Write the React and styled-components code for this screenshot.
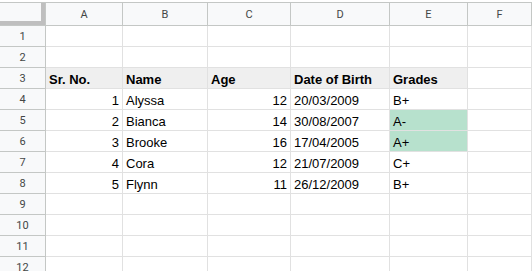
import styled, { createGlobalStyle } from "styled-components";

const GlobalStyle = createGlobalStyle`
  html, body {
    margin: 0;
    padding: 0;
    background: #fff;
    overflow: hidden;
  }
`;

const Sheet = styled.div`
  margin-top: 2px;
  border-top: 1px solid #c4c7c5;
  display: grid;
  grid-template-columns: 46px 77px 85px 83px 99px 78px 1fr;
  grid-template-rows: 23px repeat(12, 21px);
  width: 532px;
  font-family: "Liberation Sans", Arial, sans-serif;
`,
  Corner = styled.div`
    box-sizing: border-box;
    background: #f8f9fa;
    border-right: 1px solid #c4c7c5;
    border-bottom: 1px solid #c4c7c5;
    box-shadow: inset -4px -4px 0 #bfbfbf;
  `,
  ColHead = styled.div`
    box-sizing: border-box;
    background: #f8f9fa;
    border-right: 1px solid #c4c7c5;
    border-bottom: 1px solid #c4c7c5;
    display: flex;
    align-items: center;
    justify-content: center;
    font-family: Roboto, "Liberation Sans", sans-serif;
    font-size: 11px;
    color: #444746;
  `,
  RowHead = styled.div`
    box-sizing: border-box;
    background: #f8f9fa;
    border-right: 1px solid #c4c7c5;
    border-bottom: 1px solid #c4c7c5;
    display: flex;
    align-items: center;
    justify-content: center;
    font-family: Roboto, "Liberation Sans", sans-serif;
    font-size: 11px;
    color: #444746;
  `,
  Cell = styled.div`
    box-sizing: border-box;
    border-right: 1px solid #e1e1e1;
    border-bottom: 1px solid #e1e1e1;
    background: ${(p) => p.$fill || "#fff"};
    display: flex;
    align-items: flex-end;
    justify-content: ${(p) => (p.$num ? "flex-end" : "flex-start")};
    padding: 0 3px;
    font-size: 13px;
    line-height: 17px;
    font-weight: ${(p) => (p.$bold ? 700 : 400)};
    color: #000;
    white-space: nowrap;
    overflow: hidden;
  `;

const columns = ["A", "B", "C", "D", "E", "F"];

const students = [
  [1, "Alyssa", 12, "20/03/2009", "B+"],
  [2, "Bianca", 14, "30/08/2007", "A-"],
  [3, "Brooke", 16, "17/04/2005", "A+"],
  [4, "Cora", 12, "21/07/2009", "C+"],
  [5, "Flynn", 11, "26/12/2009", "B+"],
];

const headers = ["Sr. No.", "Name", "Age", "Date of Birth", "Grades"];

function buildRows() {
  const rows = [];
  for (let r = 1; r <= 12; r++) {
    let cells;
    if (r === 3) {
      cells = headers.map((h) => ({ text: h, bold: true, fill: "#efefef" }));
      cells.push({ text: "" });
    } else if (r >= 4 && r <= 8) {
      const s = students[r - 4];
      const top = s[4].startsWith("A");
      cells = [
        { text: s[0], num: true },
        { text: s[1] },
        { text: s[2], num: true },
        { text: s[3] },
        { text: s[4], fill: top ? "#b7e1cd" : null },
        { text: "" },
      ];
    } else {
      cells = columns.map(() => ({ text: "" }));
    }
    rows.push(cells);
  }
  return rows;
}

export default function App() {
  const rows = buildRows();
  return (
    <>
      <GlobalStyle />
      <Sheet>
        <Corner />
        {columns.map((c) => (
          <ColHead key={c}>{c}</ColHead>
        ))}
        {rows.map((cells, i) => [
          <RowHead key={`h${i}`}>{i + 1}</RowHead>,
          ...cells.map((cell, j) => (
            <Cell
              key={`${i}-${j}`}
              $num={cell.num}
              $bold={cell.bold}
              $fill={cell.fill}
            >
              {cell.text}
            </Cell>
          )),
        ])}
      </Sheet>
    </>
  );
}
